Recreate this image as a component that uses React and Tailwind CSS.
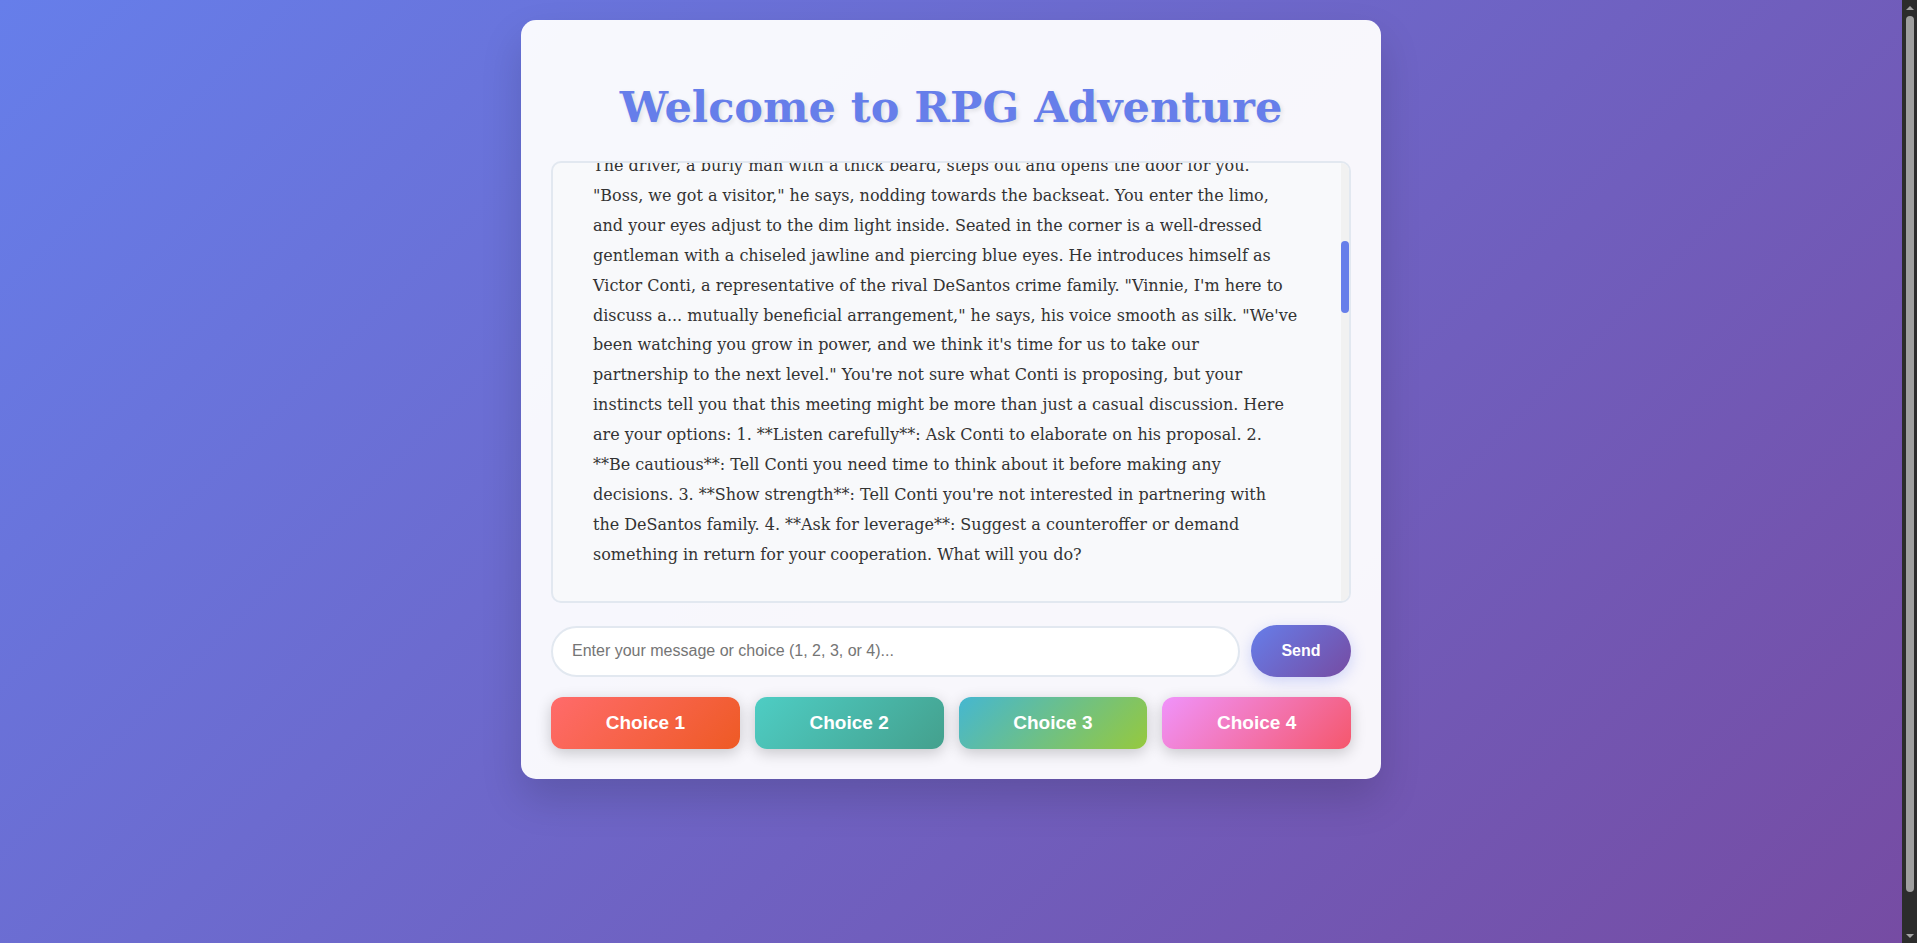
import { useEffect, useRef, useState } from 'react';

const storyLines = [
  'The driver, a burly man with a thick beard, steps out and opens the door for you.',
  '"Boss, we got a visitor," he says, nodding towards the backseat. You enter the limo,',
  'and your eyes adjust to the dim light inside. Seated in the corner is a well-dressed',
  'gentleman with a chiseled jawline and piercing blue eyes. He introduces himself as',
  'Victor Conti, a representative of the rival DeSantos crime family. "Vinnie, I\'m here to',
  'discuss a... mutually beneficial arrangement," he says, his voice smooth as silk. "We\'ve',
  'been watching you grow in power, and we think it\'s time for us to take our',
  'partnership to the next level." You\'re not sure what Conti is proposing, but your',
  'instincts tell you that this meeting might be more than just a casual discussion. Here',
  'are your options: 1. **Listen carefully**: Ask Conti to elaborate on his proposal. 2.',
  '**Be cautious**: Tell Conti you need time to think about it before making any',
  'decisions. 3. **Show strength**: Tell Conti you\'re not interested in partnering with',
  'the DeSantos family. 4. **Ask for leverage**: Suggest a counteroffer or demand',
  'something in return for your cooperation. What will you do?'
];

const choices = [
  { n: 1, cls: 'bg-[linear-gradient(135deg,#ff6b6b_0%,#ee5a24_100%)]' },
  { n: 2, cls: 'bg-[linear-gradient(135deg,#4ecdc4_0%,#44a08d_100%)]' },
  { n: 3, cls: 'bg-[linear-gradient(135deg,#45b7d1_0%,#96c93d_100%)]' },
  { n: 4, cls: 'bg-[linear-gradient(135deg,#f093fb_0%,#f5576c_100%)]' }
];

function PageScrollbar() {
  return (
    <div className="flex w-[15px] shrink-0 flex-col bg-[#2c2c2c]">
      <div className="flex h-[15px] items-center justify-center">
        <div className="h-0 w-0 border-x-[4px] border-b-[4px] border-x-transparent border-b-[#a3a3a3]" />
      </div>
      <div className="flex flex-1 justify-center pt-[1px]">
        <div className="h-[876px] w-[8px] rounded-full bg-[#9f9f9f]" />
      </div>
      <div className="flex h-[15px] items-center justify-center">
        <div className="h-0 w-0 border-x-[4px] border-t-[4px] border-x-transparent border-t-[#a3a3a3]" />
      </div>
    </div>
  );
}

export default function App() {
  const [message, setMessage] = useState('');
  const [thumb, setThumb] = useState({ top: 78, height: 73 });
  const chatRef = useRef(null);

  const updateThumb = () => {
    const el = chatRef.current;
    if (!el) return;
    const track = el.clientHeight;
    const height = (track * track) / el.scrollHeight;
    const max = el.scrollHeight - track;
    const top = max > 0 ? (el.scrollTop / max) * (track - height) : 0;
    setThumb({ top, height });
  };

  useEffect(() => {
    if (chatRef.current) chatRef.current.scrollTop = 481;
    updateThumb();
  }, []);

  return (
    <div className="flex h-screen overflow-hidden">
      <div className="flex-1 overflow-hidden">
        <div className="box-content min-h-screen p-5 bg-[linear-gradient(135deg,#667eea_0%,#764ba2_100%)]">
          <div className="mx-auto max-w-[860px] rounded-[15px] bg-[rgba(255,255,255,0.95)] p-[30px] shadow-[0_20px_40px_rgba(0,0,0,0.15)]">
            <h1 className="mt-[29px] mb-[26px] text-center font-['DejaVu_Serif',Georgia,serif] text-[43px] font-bold leading-[56px] text-[#667eea] [text-shadow:2px_2px_4px_rgba(0,0,0,0.1)]">
              Welcome to RPG Adventure
            </h1>

            <div className="flex h-[442px] overflow-hidden rounded-[10px] border-2 border-[#e2e8f0] bg-[#f8f9fb]">
              <div
                ref={chatRef}
                onScroll={updateThumb}
                className="flex-1 overflow-y-auto pt-5 pl-[40px] pr-3 [scrollbar-width:none]"
              >
                <div className="h-[449px]" aria-hidden="true" />
                <div className="font-['DejaVu_Serif',Georgia,serif] text-[16px] leading-[29.9px] text-[#333]">
                  {storyLines.map((line, i) => (
                    <div key={i} className="whitespace-nowrap">{line}</div>
                  ))}
                </div>
                <div className="h-[1800px]" aria-hidden="true" />
              </div>
              <div className="w-2 shrink-0 bg-[#f1f1f1]">
                <div
                  className="rounded-full bg-[#667eea]"
                  style={{ marginTop: thumb.top, height: thumb.height }}
                />
              </div>
            </div>

            <div className="mt-[22px] flex items-center gap-[11px]">
              <input
                value={message}
                onChange={e => setMessage(e.target.value)}
                placeholder="Enter your message or choice (1, 2, 3, or 4)..."
                className="h-[51px] flex-1 rounded-full border-2 border-[#e2e8f0] bg-white px-[19px] font-['Liberation_Sans',Arial,sans-serif] text-base text-[#333] outline-none placeholder:text-[#757575]"
              />
              <button className="h-[52px] w-[100px] rounded-full bg-[linear-gradient(135deg,#667eea_0%,#764ba2_100%)] font-['Liberation_Sans',Arial,sans-serif] text-base font-bold text-white shadow-[0_4px_15px_rgba(102,126,234,0.3)]">
                Send
              </button>
            </div>

            <div className="mt-[20px] grid grid-cols-4 gap-[15px]">
              {choices.map(c => (
                <button
                  key={c.n}
                  onClick={() => setMessage(String(c.n))}
                  className={`h-[52px] rounded-[12px] font-['Liberation_Sans',Arial,sans-serif] text-[19px] font-bold text-white shadow-[0_4px_15px_rgba(0,0,0,0.2)] ${c.cls}`}
                >
                  Choice {c.n}
                </button>
              ))}
            </div>
          </div>
        </div>
      </div>
      <PageScrollbar />
    </div>
  );
}
